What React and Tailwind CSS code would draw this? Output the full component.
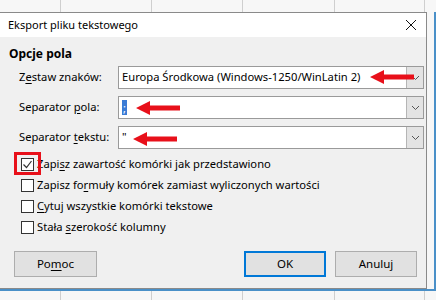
import React from "react";

const U = ({ children }) => <span className="underline underline-offset-2">{children}</span>;

const Arrow = ({ className }) => (
  <svg className={className} width="44" height="14" viewBox="0 0 44 14">
    <polygon points="0,7 14,0 14,4.5 44,4.5 44,9.5 14,9.5 14,14" fill="#e8101a" />
  </svg>
);

const Chevron = () => (
  <svg width="9" height="6" viewBox="0 0 9 6">
    <polyline points="1,1 4.5,4.5 8,1" fill="none" stroke="#555" strokeWidth="1" />
  </svg>
);

const Combo = ({ children }) => (
  <div className="flex h-[23px] flex-1 border border-[#9a9a9a] bg-white">
    <div className="relative flex flex-1 items-center pl-[3px]">{children}</div>
    <div className="flex w-[17px] items-center justify-center border-l border-[#b5b5b5] bg-[#e3e3e3]">
      <Chevron />
    </div>
  </div>
);

const Check = ({ checked, children }) => (
  <div className="flex h-[21px] items-center pl-[21px]">
    <div className="flex h-[13px] w-[13px] items-center justify-center border border-[#333] bg-white">
      {checked && (
        <svg width="11" height="11" viewBox="0 0 11 11">
          <polyline points="1.5,5.5 4.5,8.5 9.5,2" fill="none" stroke="#333" strokeWidth="1.2" />
        </svg>
      )}
    </div>
    <span className="ml-[3px]">{children}</span>
  </div>
);

const Cells = ({ h }) => (
  <div className={`flex ${h} bg-[#f7f7f7]`}>
    <div className="w-[61px] border-r border-[#cfcfcf]" />
    <div className="w-[91px] border-r border-[#cfcfcf]" />
    <div className="w-[91px] border-r border-[#cfcfcf]" />
    <div className="w-[92px] border-r border-[#cfcfcf]" />
    <div className="w-[90px] border-r border-[#cfcfcf]" />
    <div className="flex-1" />
  </div>
);

export default function App() {
  return (
    <div className="flex h-[300px] w-[436px] flex-col overflow-hidden bg-[#f7f7f7] text-[11.2px] text-black" style={{ fontFamily: '"Noto Sans", "Open Sans", sans-serif' }}>
      <Cells h="h-[12px]" />
      <div className="flex h-[277px]">
        <div className="flex w-[427px] flex-col border border-l-0 border-[#8a8a8a] bg-[#f0f0f0]">
          {/* title bar */}
          <div className="flex h-[24px] items-center justify-between bg-white pl-[8px] pr-[9px] text-[11px]">
            <span>Eksport pliku tekstowego</span>
            <svg width="12" height="12" viewBox="0 0 12 12">
              <path d="M1 1L11 11M11 1L1 11" stroke="#111" strokeWidth="1" />
            </svg>
          </div>

          <div className="flex flex-1 flex-col pt-[7px]">
            <div className="pl-[9px] text-[12px] font-bold leading-[20px]">Opcje pola</div>

            <div className="mt-[2px] flex flex-col gap-[7px] pr-[2px]">
              <div className="flex items-center">
                <span className="w-[118px] pl-[19px]">Z<U>e</U>staw znaków:</span>
                <Combo>
                  <span>Europa Środkowa (Windows-1250/WinLatin 2)</span>
                  <Arrow className="absolute left-[251px] top-[3px]" />
                </Combo>
              </div>
              <div className="flex items-center">
                <span className="w-[118px] pl-[19px]">Separator <U>p</U>ola:</span>
                <Combo>
                  <span className="bg-[#3a7bd5] px-[1px] leading-[15px] text-white">;</span>
                  <Arrow className="absolute left-[17px] top-[4px]" />
                </Combo>
              </div>
              <div className="flex items-center">
                <span className="w-[118px] pl-[19px]">Separator <U>t</U>ekstu:</span>
                <Combo>
                  <span>"</span>
                  <Arrow className="absolute left-[14px] top-[5px]" />
                </Combo>
              </div>
            </div>

            <div className="mt-[5px] flex flex-col">
              <div className="relative">
                <div className="absolute left-[14px] top-[-2px] h-[23px] w-[27px] border-[3px] border-[#e8101a]" />
                <Check checked>Zapi<U>s</U>z zawartość komórki jak przedstawiono</Check>
              </div>
              <Check>Zapisz fo<U>r</U>muły komórek zamiast wyliczonych wartości</Check>
              <Check><U>C</U>ytuj wszystkie komórki tekstowe</Check>
              <Check>Stała <U>s</U>zerokość kolumny</Check>
            </div>

            <div className="mt-auto mb-[11px] flex items-center pl-[14px] pr-[9px] text-[11.5px]">
              <button className="h-[26px] w-[83px] border border-[#adadad] bg-[#e1e1e1]">Po<U>m</U>oc</button>
              <div className="flex-1" />
              <button className="h-[26px] w-[82px] border-2 border-[#0078d7] bg-[#e1e1e1]">OK</button>
              <button className="ml-[9px] h-[26px] w-[82px] border border-[#adadad] bg-[#e1e1e1]">Anuluj</button>
            </div>
          </div>
        </div>
        <div className="flex-1 border-r-[2px] border-[#4a90c8]" />
      </div>
      <div className="border-t-2 border-[#4a90c8]">
        <Cells h="h-[9px]" />
      </div>
    </div>
  );
}
